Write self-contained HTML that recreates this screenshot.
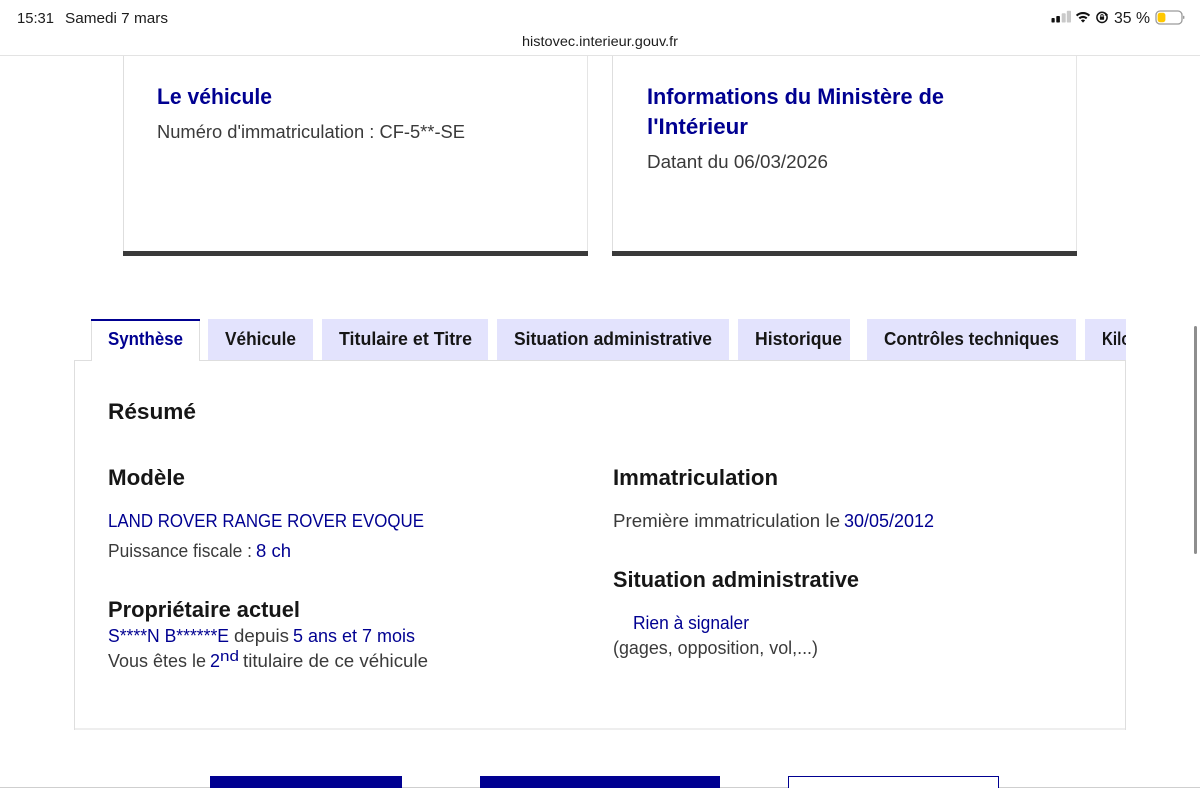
<!DOCTYPE html>
<html lang="fr"><head><meta charset="utf-8"><title>HistoVec</title>
<style>
html,body{margin:0;padding:0;background:#fff;width:1200px;height:788px;overflow:hidden}
svg{display:block;position:absolute;left:0;top:0}
text{font-family:"Liberation Sans",sans-serif;white-space:pre;filter:blur(.3px)}
.s{font-size:15px;fill:#1c1c1c}
.h{font-size:22px;font-weight:700;fill:#000091}
.b{font-size:18px;fill:#3a3a3a}
.l{fill:#000091}
.t{font-size:18px;font-weight:700;fill:#161616}
.a{font-size:18px;font-weight:700;fill:#000091}
.r{font-size:22px;font-weight:700;fill:#161616}
</style></head><body>
<svg width="1200" height="788" viewBox="0 0 1200 788" xmlns="http://www.w3.org/2000/svg">
<rect width="1200" height="788" fill="#fff"/>
<!-- status bar -->
<text class="s" x="17" y="23" textLength="37" lengthAdjust="spacingAndGlyphs">15:31</text>
<text class="s" x="65" y="23" textLength="103" lengthAdjust="spacingAndGlyphs">Samedi 7 mars</text>
<text x="522" y="46" font-size="14" fill="#1c1c1c" textLength="156" lengthAdjust="spacingAndGlyphs">histovec.interieur.gouv.fr</text>
<rect x="1051.5" y="18" width="3.2" height="4.5" rx=".8" fill="#111"/>
<rect x="1056.3" y="16" width="3.6" height="6.5" rx=".8" fill="#111"/>
<rect x="1061.7" y="13.3" width="4" height="9.2" rx=".8" fill="#c9c9c9"/>
<rect x="1066.8" y="10.8" width="4.2" height="11.7" rx=".8" fill="#c9c9c9"/>
<path d="M1076.6 15.6a9.4 9.4 0 0 1 12.8 0" fill="none" stroke="#111" stroke-width="2.1"/>
<path d="M1079.3 18.4a5.4 5.4 0 0 1 7.4 0" fill="none" stroke="#111" stroke-width="2.1"/>
<path d="M1080.9 20.4a3 3 0 0 1 4.2 0L1083 22.6Z" fill="#111"/>
<circle cx="1102" cy="17.4" r="5.1" fill="none" stroke="#111" stroke-width="1.5"/>
<rect x="1099.9" y="16.6" width="4.2" height="3.2" rx=".5" fill="#111"/>
<path d="M1100.8 16.8v-1a1.2 1.2 0 0 1 2.4 0v1" fill="none" stroke="#111" stroke-width=".9"/>
<path d="M1105.6 12.4l2.5 2.6-3.4.8z" fill="#111"/>
<text x="1114" y="23" font-size="16" fill="#1c1c1c" textLength="36" lengthAdjust="spacingAndGlyphs">35 %</text>
<rect x="1156" y="11" width="26" height="13" rx="4" fill="#fff" stroke="#9a9a9a" stroke-width="1.3"/>
<rect x="1157.6" y="12.8" width="7.8" height="9.4" rx="2.4" fill="#ffc800"/>
<rect x="1183" y="15.8" width="1.4" height="3.2" rx="0.7" fill="#9a9a9a"/>
<rect x="0" y="55" width="1200" height="1" fill="#e3e3e3"/>
<!-- cards -->
<rect x="123" y="56" width="1" height="196" fill="#dedede"/>
<rect x="587" y="56" width="1" height="196" fill="#e5e5e5"/>
<rect x="123" y="251" width="465" height="5" fill="#3a3a3a"/>
<rect x="612" y="56" width="1" height="196" fill="#dedede"/>
<rect x="1076" y="56" width="1" height="196" fill="#e5e5e5"/>
<rect x="612" y="251" width="465" height="5" fill="#3a3a3a"/>
<text class="h" x="157" y="104" textLength="115" lengthAdjust="spacingAndGlyphs">Le véhicule</text>
<text class="b" x="157" y="138" textLength="308" lengthAdjust="spacingAndGlyphs">Numéro d'immatriculation : CF-5**-SE</text>
<text class="h" x="647" y="104" textLength="297" lengthAdjust="spacingAndGlyphs">Informations du Ministère de</text>
<text class="h" x="647" y="134" textLength="101" lengthAdjust="spacingAndGlyphs">l'Intérieur</text>
<text class="b" x="647" y="168" textLength="181" lengthAdjust="spacingAndGlyphs">Datant du 06/03/2026</text>
<!-- tabs -->
<rect x="208" y="319" width="105" height="41" fill="#e3e3fd"/>
<rect x="322" y="319" width="166" height="41" fill="#e3e3fd"/>
<rect x="497" y="319" width="232" height="41" fill="#e3e3fd"/>
<rect x="738" y="319" width="112" height="41" fill="#e3e3fd"/>
<rect x="867" y="319" width="209" height="41" fill="#e3e3fd"/>
<rect x="1085" y="319" width="41" height="41" fill="#e3e3fd"/>
<!-- panel -->
<rect x="74" y="360" width="1052" height="1" fill="#dedede"/>
<rect x="74" y="360" width="1" height="370" fill="#dedede"/>
<rect x="1125" y="361" width="1" height="369" fill="#dedede"/>
<rect x="74" y="728.5" width="1052" height="1" fill="#dedede"/>
<!-- active tab -->
<rect x="91" y="319" width="109" height="43" fill="#fff"/>
<rect x="91" y="319" width="1" height="42" fill="#dedede"/>
<rect x="199" y="319" width="1" height="42" fill="#dedede"/>
<rect x="91" y="319" width="109" height="2" fill="#000091"/>
<text class="a" x="108" y="345" textLength="75" lengthAdjust="spacingAndGlyphs">Synthèse</text>
<text class="t" x="225" y="345" textLength="71" lengthAdjust="spacingAndGlyphs">Véhicule</text>
<text class="t" x="339" y="345" textLength="133" lengthAdjust="spacingAndGlyphs">Titulaire et Titre</text>
<text class="t" x="514" y="345" textLength="198" lengthAdjust="spacingAndGlyphs">Situation administrative</text>
<text class="t" x="755" y="345" textLength="87" lengthAdjust="spacingAndGlyphs">Historique</text>
<text class="t" x="884" y="345" textLength="175" lengthAdjust="spacingAndGlyphs">Contrôles techniques</text>
<svg x="1085" y="319" width="41" height="42" viewBox="1085 319 41 42"><text class="t" x="1102" y="345" textLength="42" lengthAdjust="spacingAndGlyphs">Kilom</text></svg>
<!-- content -->
<text class="r" x="108" y="419" textLength="88" lengthAdjust="spacingAndGlyphs">Résumé</text>
<text class="r" x="108" y="485" textLength="77" lengthAdjust="spacingAndGlyphs">Modèle</text>
<text class="b l" x="108" y="527" textLength="316" lengthAdjust="spacingAndGlyphs">LAND ROVER RANGE ROVER EVOQUE</text>
<text class="b" x="108" y="557" textLength="144" lengthAdjust="spacingAndGlyphs">Puissance fiscale :</text>
<text class="b l" x="256" y="557" textLength="35" lengthAdjust="spacingAndGlyphs">8 ch</text>
<text class="r" x="108" y="617" textLength="192" lengthAdjust="spacingAndGlyphs">Propriétaire actuel</text>
<text class="b l" x="108" y="642" textLength="121" lengthAdjust="spacingAndGlyphs">S****N B******E</text>
<text class="b" x="234" y="642" textLength="55" lengthAdjust="spacingAndGlyphs">depuis</text>
<text class="b l" x="293" y="642" textLength="122" lengthAdjust="spacingAndGlyphs">5 ans et 7 mois</text>
<text class="b" x="108" y="667" textLength="98" lengthAdjust="spacingAndGlyphs">Vous êtes le</text>
<text class="b l" x="210" y="667" textLength="10" lengthAdjust="spacingAndGlyphs">2</text>
<text class="l" x="220" y="661" font-size="15" textLength="19" lengthAdjust="spacingAndGlyphs">nd</text>
<text class="b" x="243" y="667" textLength="185" lengthAdjust="spacingAndGlyphs">titulaire de ce véhicule</text>
<text class="r" x="613" y="485" textLength="165" lengthAdjust="spacingAndGlyphs">Immatriculation</text>
<text class="b" x="613" y="527" textLength="227" lengthAdjust="spacingAndGlyphs">Première immatriculation le</text>
<text class="b l" x="844" y="527" textLength="90" lengthAdjust="spacingAndGlyphs">30/05/2012</text>
<text class="r" x="613" y="587" textLength="246" lengthAdjust="spacingAndGlyphs">Situation administrative</text>
<text class="b l" x="633" y="629" textLength="116" lengthAdjust="spacingAndGlyphs">Rien à signaler</text>
<text class="b" x="613" y="654" textLength="205" lengthAdjust="spacingAndGlyphs">(gages, opposition, vol,...)</text>
<!-- bottom -->
<rect x="0" y="787" width="1200" height="1" fill="#cfcfcf"/>
<rect x="210" y="776" width="192" height="12" fill="#000091"/>
<rect x="480" y="776" width="240" height="12" fill="#000091"/>
<rect x="788.5" y="776.5" width="210" height="12" fill="#fff" stroke="#000091" stroke-width="1"/>
<!-- scrollbar -->
<rect x="1194" y="326" width="3" height="228" rx="1.5" fill="#8e8e8e"/>
</svg>
</body></html>
